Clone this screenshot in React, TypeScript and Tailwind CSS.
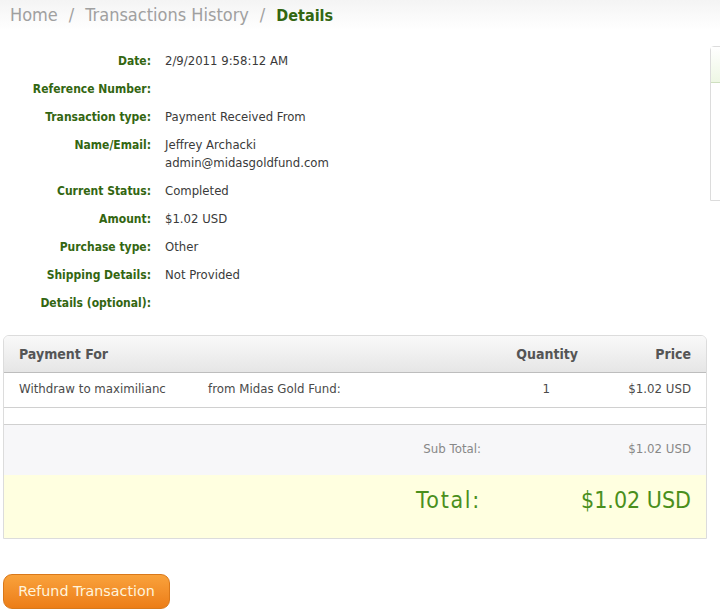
import React from 'react';

const rows: { label: string; value?: string[] }[] = [
  { label: 'Date:', value: ['2/9/2011 9:58:12 AM'] },
  { label: 'Reference Number:' },
  { label: 'Transaction type:', value: ['Payment Received From'] },
  { label: 'Name/Email:', value: ['Jeffrey Archacki', 'admin@midasgoldfund.com'] },
  { label: 'Current Status:', value: ['Completed'] },
  { label: 'Amount:', value: ['$1.02 USD'] },
  { label: 'Purchase type:', value: ['Other'] },
  { label: 'Shipping Details:', value: ['Not Provided'] },
  { label: 'Details (optional):' },
];

export default function App() {
  return (
    <div className="relative h-[611px] w-[720px] overflow-hidden bg-white font-['DejaVu_Sans',sans-serif]">
      <div className="h-[30px] bg-gradient-to-b from-[#f4f4f4] to-white px-[10px] pt-[4px] text-[18px] leading-[22px] text-[#a0a0a0] font-stretch-condensed">
        <span>Home</span>
        <span className="mx-[11px]">/</span>
        <span>Transactions History</span>
        <span className="mx-[11px]">/</span>
        <span className="text-[16px] font-bold text-[#336611]">Details</span>
      </div>

      {/* side panel peeking in from the right */}
      <div className="absolute left-[710px] top-[46px] h-[155px] w-[30px] rounded-tl-[4px] border border-[#dcdcdc]">
        <div className="h-[36px] border-b border-[#cfe0c0] bg-gradient-to-b from-white to-[#eef7e4]" />
      </div>

      <div className="mt-[22px] flex flex-col gap-[10px] text-[12px] leading-[18px]">
        {rows.map((r) => (
          <div key={r.label} className="flex">
            <div className="w-[151px] shrink-0 text-right font-bold text-[#336611] font-stretch-condensed">{r.label}</div>
            <div className="ml-[14px] text-[11.7px] text-[#3a3a3a]">
              {r.value?.map((v) => <div key={v}>{v}</div>)}
            </div>
          </div>
        ))}
      </div>

      <div className="mx-[3px] mt-[23px] w-[704px] overflow-hidden rounded-t-[6px] border border-[#dcdcdc] text-[11.8px]">
        <div className="flex h-[37px] items-center border-b border-[#bdbdbd] bg-gradient-to-b from-[#f9f9f9] to-[#e6e6e6] px-[15px] text-[14px] font-bold text-[#555] font-stretch-condensed">
          <div className="flex-1">Payment For</div>
          <div className="w-[80px] text-right">Quantity</div>
          <div className="w-[113px] text-right">Price</div>
        </div>
        <div className="flex h-[35px] items-center border-b border-[#d0d0d0] px-[15px] text-[#4a4a4a]">
          <div className="w-[189px]">Withdraw to maximilianc</div>
          <div className="flex-1">from Midas Gold Fund:</div>
          <div className="w-[80px] pr-[28px] text-right">1</div>
          <div className="w-[113px] text-right">$1.02 USD</div>
        </div>
        <div className="h-[17px] border-b border-[#d0d0d0]" />
        <div className="flex h-[50px] items-center bg-[#f7f7f9] px-[15px] text-[#888]">
          <div className="flex-1 text-right">Sub Total:</div>
          <div className="w-[210px] text-right">$1.02 USD</div>
        </div>
        <div className="flex h-[63px] items-start bg-[#ffffe0] px-[15px] pt-[8px] text-[23px] text-[#4a8f1c] font-stretch-condensed">
          <div className="flex-1 text-right tracking-[1.7px]">Total:</div>
          <div className="w-[210px] text-right">$1.02 USD</div>
        </div>
      </div>

      <button className="ml-[3px] mt-[35px] h-[35px] w-[167px] rounded-[9px] border border-[#d9781a] bg-gradient-to-b from-[#f9a23b] to-[#ec7d16] text-[14.3px] text-[#fff4dc]">
        Refund Transaction
      </button>
    </div>
  );
}
